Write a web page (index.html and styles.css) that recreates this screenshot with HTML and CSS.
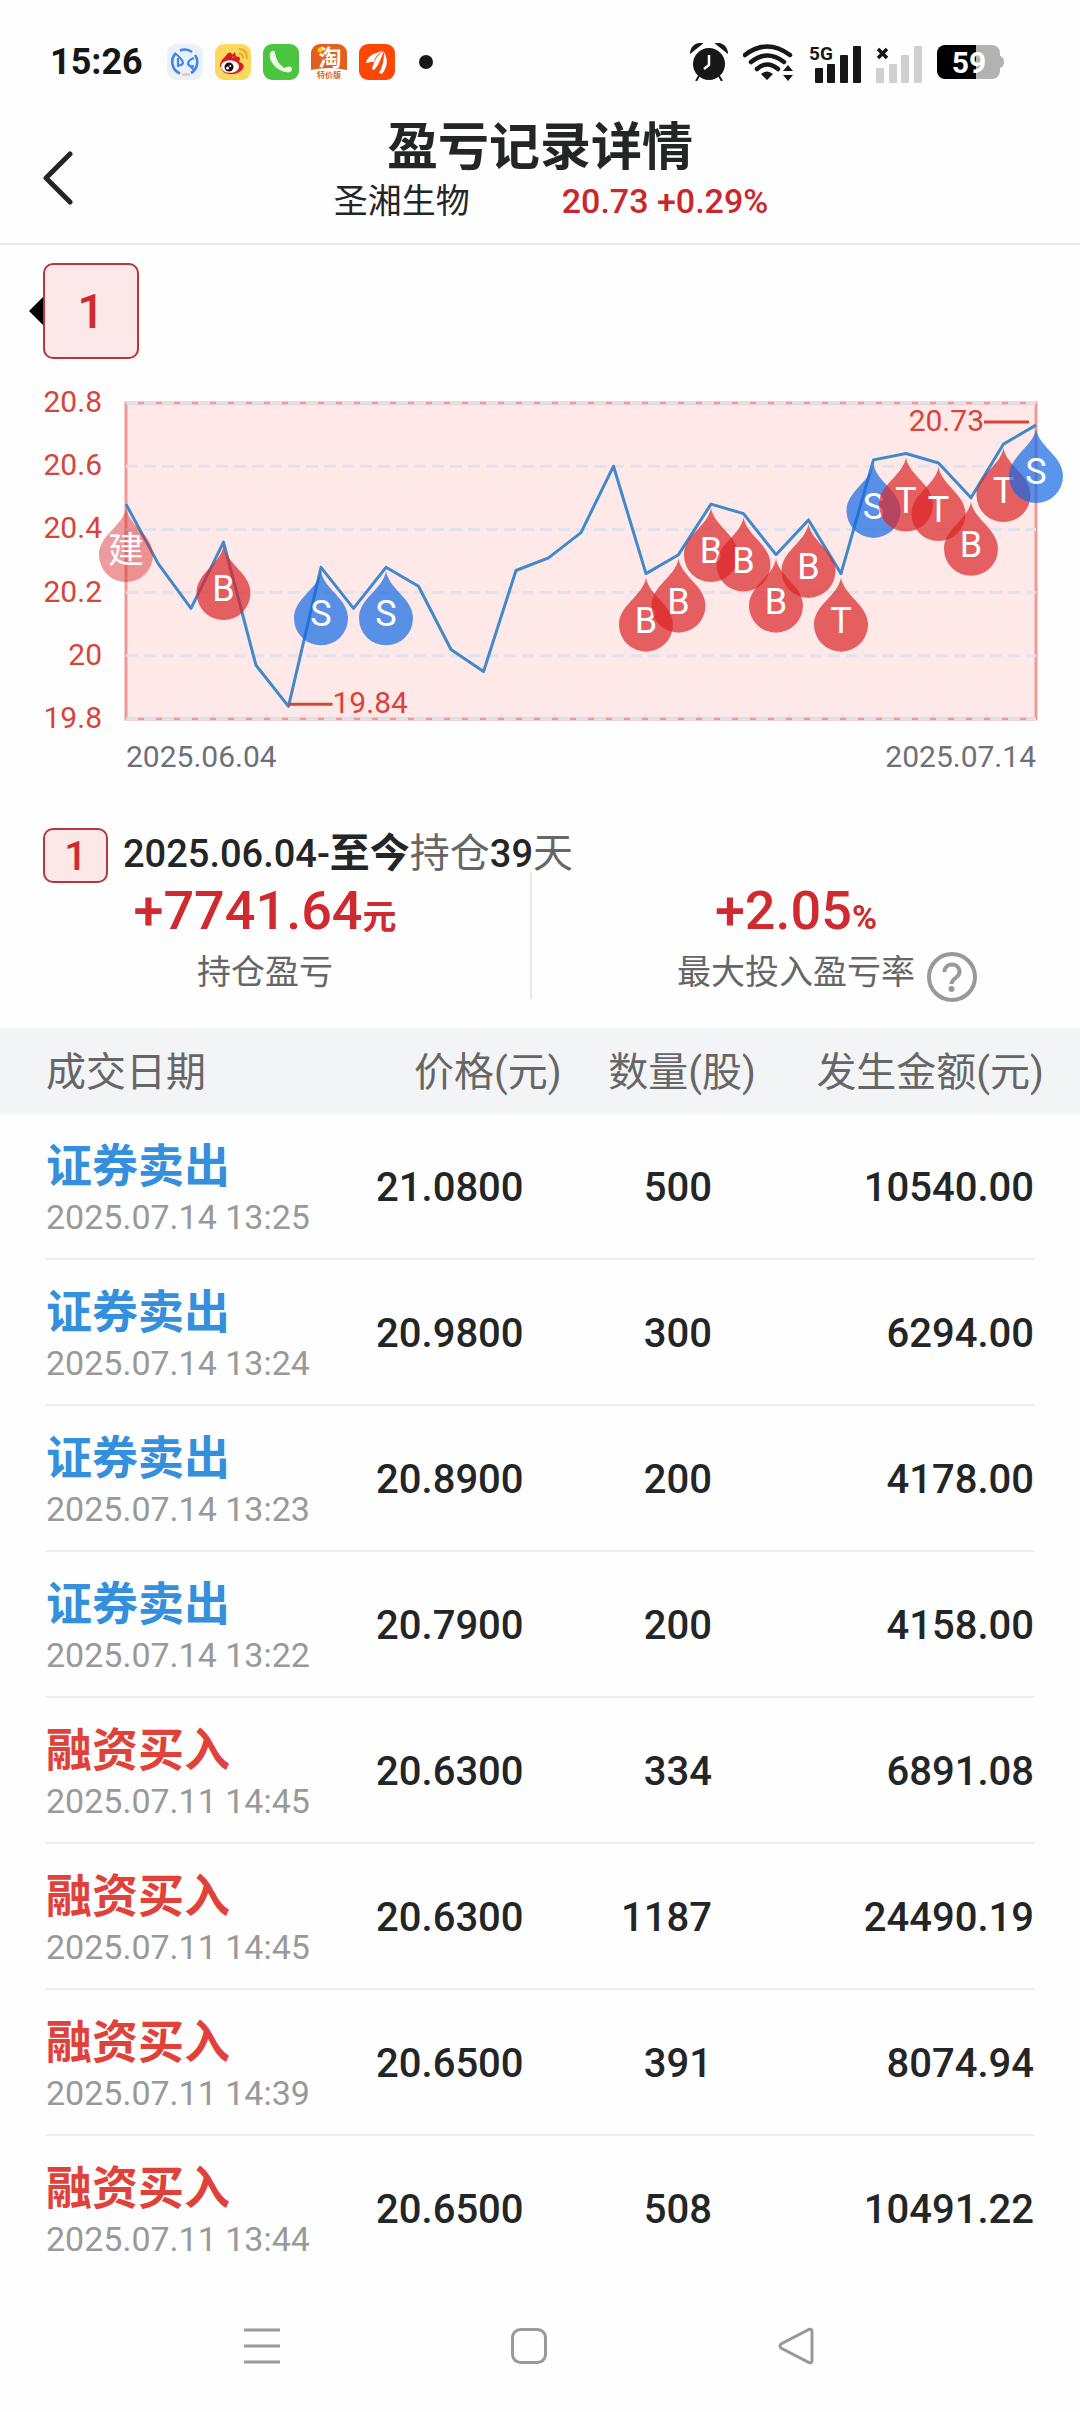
FILE: index.html
```html
<!DOCTYPE html>
<html lang="zh-CN">
<head>
  <meta charset="UTF-8" />
  <meta name="viewport" content="width=device-width, initial-scale=1" />
  <title>盈亏记录详情</title>
  <link rel="stylesheet" href="styles.css">
</head>
<body>

<div class="status-bar">
  <div class="status-left">
    <span class="clock">15:26</span>
    <svg class="app-icon" viewBox="0 0 36 36">
      <rect width="36" height="36" rx="9" fill="#eaf1fb"/>
      <path d="M9 9A12.500 12.500 0 0 0 13 29.500M24 29A12.500 12.500 0 0 0 28 11M13 6.500A12.500 12.500 0 0 1 25 8" fill="none" stroke="#3f86ea" stroke-width="2.600"/>
      <path d="M9 10q7 6 7 9-1 3-5 2M11 14v9M27 22q-5 1-6-2 0-4 6-6M21 20l6 6" fill="none" stroke="#3f86ea" stroke-width="2.200"/>
      <path d="M15 30.500h8" stroke="#f2c1ab" stroke-width="2.500"/>
    </svg>
    <svg class="app-icon" viewBox="0 0 36 36">
      <rect width="36" height="36" rx="9" fill="#fbd95f"/>
      <path d="M5 23c-1-6 7-14 11-13 2 0 2 2 1 4 4-2 8-2 8 1l-1 3c5 1 6 5 3 8-5 6-20 6-21-3z" fill="#d81e20"/>
      <path d="M11 12c1-4 6-5 6-1l3-3 1 5" fill="#d81e20"/>
      <ellipse cx="15" cy="22.500" rx="9" ry="6.300" fill="#fff"/>
      <circle cx="14" cy="23" r="4.500" fill="#111"/>
      <circle cx="12.600" cy="24" r="1.500" fill="#fff"/>
      <circle cx="15.300" cy="22" r="1" fill="#fff"/>
      <path d="M24 9.500c3 0 4 2 4 5M24 5c6 0 8 4 8 10" fill="none" stroke="#f0a22b" stroke-width="2"/>
    </svg>
    <svg class="app-icon" viewBox="0 0 36 36">
      <rect width="36" height="36" rx="9" fill="#4bc53d"/>
      <path d="M7 9c2-3 5-3 5 0l1 4c1 4 4 8 8 11l3-1c3-1 5 0 5 2 0 3-3 4-6 3C14 27 5 17 7 9z" fill="#e9f9e6"/>
    </svg>
    <svg class="app-icon" viewBox="0 0 36 36">
      <path d="M0 26V9a9 9 0 0 1 9-9h18a9 9 0 0 1 9 9v17q-18-4-36 0z" fill="#e2601d"/>
      <text x="19" y="22" class="tao">淘</text>
      <circle cx="9" cy="6" r="2.500" fill="#ffd200"/>
      <text x="18" y="34" class="tao-sub">特价版</text>
    </svg>
    <svg class="app-icon" viewBox="0 0 36 36">
      <rect width="36" height="36" rx="9" fill="#fd4703"/>
      <path d="M7 19c1-6 7-10 17-12-5 3-8 6-9 11-3-1-5 1-8 1zM13 25c2-8 5-14 12-18-3 6-4 13-10 19zM20 29c4-7 5-14 5-21 4 7 4 15-2 22z" fill="#fff"/>
    </svg>
    <span class="dot"></span>
  </div>
  <div class="status-right">
    <svg width="38" height="38" viewBox="0 0 38 38" fill="#171717">
      <circle cx="19" cy="21" r="16"/>
      <path d="M1 9a9 9 0 0 1 10-8zM37 9a9 9 0 0 0-10-8zM9 33l-3 5M29 33l3 5" stroke="#171717" stroke-width="2"/>
      <path d="M19 12v10l-5 4" fill="none" stroke="#fff" stroke-width="2.500"/>
    </svg>
    <svg width="51" height="38" viewBox="0 0 51 38">
      <path d="M2 12Q24-5 47 12M8 19Q24 6 41 19M14 26Q24 17 35 26" fill="none" stroke="#171717" stroke-width="4.500" stroke-linecap="round"/>
      <path d="M18 31q6-5 12 0l-6 6zM40 28l5-6 5 6zM40 32l5 6 5-6z" fill="#171717"/>
    </svg>
    <svg width="52" height="42" viewBox="0 -4 52 42" fill="#171717">
      <text x="0" y="15" class="net">5G</text>
      <rect x="6" y="23" width="8" height="15" rx="1"/>
      <rect x="18" y="19" width="8" height="19" rx="1"/>
      <rect x="31" y="10" width="8" height="28" rx="1"/>
      <rect x="44" y="1" width="8" height="37" rx="1"/>
    </svg>
    <svg width="46" height="42" viewBox="0 -4 46 42" fill="#d0d0d0">
      <path d="M2 4l9 9M11 4l-9 9" stroke="#171717" stroke-width="3.500"/>
      <rect x="0" y="23" width="8" height="15" rx="1"/>
      <rect x="13" y="19" width="8" height="19" rx="1"/>
      <rect x="25" y="10" width="8" height="28" rx="1"/>
      <rect x="38" y="1" width="8" height="37" rx="1"/>
    </svg>
    <svg width="67" height="34" viewBox="0 0 67 34">
      <path d="M39 0h16a8 8 0 0 1 8 8v3q4 1 4 6t-4 6v3a8 8 0 0 1-8 8H39z" fill="#b2b2b2"/>
      <path d="M8 0h31v34H8a8 8 0 0 1-8-8V8a8 8 0 0 1 8-8z"/>
      <text x="32" y="28" class="battery">59</text>
    </svg>
  </div>
</div>

<header class="header">
  <button class="back" aria-label="返回">
    <svg width="30" height="54" viewBox="0 0 30 54"><path d="M27 3L3 27l24 24" fill="none" stroke="#232526" stroke-width="5" stroke-linecap="round" stroke-linejoin="round"/></svg>
  </button>
  <div>
    <h1>盈亏记录详情</h1>
    <p class="stock"><span>圣湘生物</span><span class="quote">20.73 +0.29%</span></p>
  </div>
</header>

<main>
  <div class="tabs">
    <button class="tab">1</button>
  </div>

  <svg class="chart" id="chart" viewBox="0 0 1080 410"></svg>

  <section class="summary">
    <div class="period">
      <span class="badge">1</span>
      <p><b>2025.06.04-<strong>至今</strong></b>持仓<b>39</b>天</p>
    </div>
    <div class="stats">
      <div class="stat">
        <p class="value">+7741.64<small>元</small></p>
        <p class="label">持仓盈亏</p>
      </div>
      <div class="stat">
        <p class="value">+2.05<small>%</small></p>
        <p class="label">最大投入盈亏率<button class="help" aria-label="说明">
          <svg width="50" height="50" viewBox="0 0 50 50" fill="none" stroke="#999" stroke-width="4"><circle cx="25" cy="25" r="23"/><path d="M17.500 20c0-10 15-10 15 0 0 6-8 6-8 12"/><circle cx="24.500" cy="37" r="3" fill="#999" stroke="none"/></svg>
        </button></p>
      </div>
    </div>
  </section>

  <table class="trades">
    <thead>
      <tr><th>成交日期</th><th>价格(元)</th><th>数量(股)</th><th>发生金额(元)</th></tr>
    </thead>
    <tbody>
      <tr><td class="sell"><strong>证券卖出</strong><time>2025.07.14 13:25</time></td><td>21.0800</td><td>500</td><td>10540.00</td></tr>
      <tr><td class="sell"><strong>证券卖出</strong><time>2025.07.14 13:24</time></td><td>20.9800</td><td>300</td><td>6294.00</td></tr>
      <tr><td class="sell"><strong>证券卖出</strong><time>2025.07.14 13:23</time></td><td>20.8900</td><td>200</td><td>4178.00</td></tr>
      <tr><td class="sell"><strong>证券卖出</strong><time>2025.07.14 13:22</time></td><td>20.7900</td><td>200</td><td>4158.00</td></tr>
      <tr><td class="buy"><strong>融资买入</strong><time>2025.07.11 14:45</time></td><td>20.6300</td><td>334</td><td>6891.08</td></tr>
      <tr><td class="buy"><strong>融资买入</strong><time>2025.07.11 14:45</time></td><td>20.6300</td><td>1187</td><td>24490.19</td></tr>
      <tr><td class="buy"><strong>融资买入</strong><time>2025.07.11 14:39</time></td><td>20.6500</td><td>391</td><td>8074.94</td></tr>
      <tr><td class="buy"><strong>融资买入</strong><time>2025.07.11 13:44</time></td><td>20.6500</td><td>508</td><td>10491.22</td></tr>
    </tbody>
  </table>
</main>

<nav class="nav-bar">
  <button aria-label="菜单"><svg width="36" height="38" viewBox="0 0 36 38"><path d="M0 3h36M0 19h36M0 35h36"/></svg></button>
  <button aria-label="主页"><svg width="36" height="38" viewBox="0 0 36 38"><rect x="1.500" y="2.500" width="33" height="33" rx="8"/></svg></button>
  <button aria-label="后退"><svg width="36" height="38" viewBox="0 0 36 38"><path d="M31 2.500q3-1 3 2v29q0 3-3 2L3 21q-2-2 0-4z"/></svg></button>
</nav>

<script src="chart.js"></script>
</body>
</html>
```
FILE: styles.css
```css
* {
  box-sizing: border-box;
}

body {
  margin: 0;
  background: #fefefe;
  color: #232526;
  font-family: Roboto, "Noto Sans CJK SC", sans-serif;
}

h1,
p {
  margin: 0;
}

button {
  padding: 0;
  border: none;
  background: none;
  font-family: inherit;
  cursor: pointer;
}

svg {
  display: block;
}

/* status bar */
.status-bar {
  display: flex;
  justify-content: space-between;
  align-items: center;
  height: 108px;
  padding: 16px 76px 0 50px;
}

.status-left,
.status-right {
  display: flex;
  align-items: center;
}

.status-left {
  gap: 12px;
}

.status-right {
  gap: 15px;
}

.clock {
  margin-right: 12px;
  color: #171717;
  font-size: 36px;
  font-weight: 700;
}

.app-icon {
  width: 36px;
  height: 36px;
}

.tao {
  fill: #fff;
  font-size: 23px;
  font-weight: 700;
  text-anchor: middle;
}

.tao-sub {
  fill: #e2601d;
  font-size: 8px;
  font-weight: 700;
  text-anchor: middle;
}

.dot {
  width: 14px;
  height: 14px;
  margin-left: 12px;
  border-radius: 50%;
  background: #171717;
}

.net {
  font-size: 19px;
  font-weight: 700;
}

.battery {
  fill: #fff;
  font-size: 30px;
  font-weight: 700;
  text-anchor: middle;
}

/* page header */
.header {
  display: grid;
  grid-template-columns: 1fr auto 1fr;
  align-items: center;
  height: 137px;
  padding: 6px 43px 10px;
  border-bottom: 2px solid #e6e8e9;
  text-align: center;
}

.back {
  justify-self: start;
  margin-top: 8px;
}

.header h1 {
  font-size: 51px;
  font-weight: 700;
  line-height: 54px;
}

.stock {
  display: flex;
  gap: 92px;
  padding-left: 22px;
  font-size: 34px;
  line-height: 52px;
}

.quote {
  color: #c9272c;
  font-weight: 500;
}

/* position tabs */
.tabs {
  padding: 18px 43px 0;
}

.tab,
.badge {
  display: block;
  border: 2px solid #b5373c;
  background: #fce8e8;
  color: #cf2a2f;
  font-weight: 500;
  text-align: center;
}

.tab {
  position: relative;
  width: 96px;
  height: 96px;
  border-radius: 10px;
  font-size: 48px;
}

.tab::before {
  content: "";
  position: absolute;
  top: 32px;
  right: 94px;
  border: 14px solid transparent;
  border-left: 0;
  border-right-color: #000;
}

.badge {
  width: 65px;
  height: 55px;
  border-radius: 10px;
  font-size: 40px;
  line-height: 54px;
}

/* chart */
.chart {
  width: 100%;
  margin-top: 11px;
  font-size: 30px;
}

.area {
  fill: #ffe9e8;
  stroke: #f09a95;
  stroke-width: 3;
}

.grid {
  stroke: #e0e3ec;
  stroke-width: 3;
  stroke-dasharray: 12 6;
}

.price-line {
  fill: none;
  stroke: #4089cb;
  stroke-width: 3;
  stroke-linejoin: round;
}

.axis-label,
.peak {
  fill: #d8433a;
}

.axis-label,
.end {
  text-anchor: end;
}

.date {
  fill: #6e7079;
}

.peak-line {
  stroke: #d8433a;
  stroke-width: 3;
}

.pin-buy {
  fill: #db2327;
  fill-opacity: 0.7;
}

.pin-open {
  fill: #db2327;
  fill-opacity: 0.45;
}

.pin-sell {
  fill: #1368e4;
  fill-opacity: 0.7;
}

.pin-text {
  fill: #fff;
  font-size: 36px;
  text-anchor: middle;
}

/* summary */
.summary {
  padding: 48px 0 29px;
}

.period {
  display: flex;
  gap: 15px;
  height: 55px;
  padding-left: 43px;
  color: #666;
  font-size: 40px;
  line-height: 52px;
}

.period b {
  color: #232526;
  font-size: 38px;
  font-weight: 500;
}

.period strong {
  font-size: 40px;
  font-weight: 700;
}

.stats {
  display: grid;
  grid-template-columns: 1fr 1fr;
  margin-top: -11px;
  padding-right: 20px;
  text-align: center;
}

.stat {
  padding: 11px 0 7px;
}

.stat + .stat {
  border-left: 2px solid #e6e8e9;
}

.value {
  color: #cf2a2f;
  font-size: 54px;
  font-weight: 500;
  line-height: 56px;
}

.value small {
  font-size: 34px;
  font-weight: 700;
  line-height: 34px;
}

.label {
  margin-top: 13px;
  color: #666;
  font-size: 34px;
  line-height: 40px;
}

.help {
  position: absolute;
  margin-left: 12px;
}

/* trades */
.trades {
  width: 100%;
  border-collapse: collapse;
  table-layout: fixed;
}

.trades th {
  height: 86px;
  padding: 0 0 4px;
  background: #f3f4f6;
  color: #666;
  font-size: 40px;
  font-weight: 400;
  text-align: right;
}

.trades th:first-child {
  width: 32%;
  padding-left: 46px;
  text-align: left;
}

.trades th:nth-child(2) {
  width: 20%;
}

.trades th:nth-child(3) {
  width: 18%;
}

.trades th:last-child {
  width: 30%;
  padding-right: 36px;
}

.trades tbody tr {
  background: linear-gradient(#ededed, #ededed) bottom / calc(100% - 92px) 2px no-repeat;
}

.trades tbody tr:last-child {
  background: none;
}

.trades td {
  height: 146px;
  padding: 0 44px 0 0;
  font-size: 40px;
  font-weight: 500;
  text-align: right;
}

.trades td:nth-child(2) {
  padding-right: 38px;
}

.trades td:first-child {
  padding: 6px 0 0 46px;
  text-align: left;
  white-space: nowrap;
}

.trades td:last-child {
  padding-right: 46px;
}

.trades td strong {
  display: block;
  font-size: 46px;
  line-height: 54px;
}

.trades time {
  display: block;
  color: #999;
  font-size: 34px;
  font-weight: 400;
  line-height: 48px;
}

.sell {
  color: #348fdd;
}

.buy {
  color: #e04239;
}

/* system navigation */
.nav-bar {
  display: flex;
  justify-content: space-between;
  align-items: center;
  height: 128px;
  padding: 0 24.6% 0 22.6%;
}

.nav-bar svg {
  fill: none;
  stroke: #999;
  stroke-width: 3;
}
```
FILE: chart.js
```js
const chart = document.getElementById("chart");

const prices = [
  20.48, 20.29, 20.15, 20.36, 19.97, 19.84, 20.28, 20.15, 20.28, 20.22,
  20.02, 19.95, 20.27, 20.31, 20.39, 20.6, 20.26, 20.32, 20.48, 20.45,
  20.32, 20.43, 20.26, 20.62, 20.64, 20.61, 20.5, 20.67, 20.73
];

// day index -> marker text
const marks = {
  0: "建", 3: "B", 6: "S", 8: "S", 16: "B", 17: "B", 18: "B", 19: "B", 20: "B",
  21: "B", 22: "T", 23: "S", 24: "T", 25: "T", 26: "B", 27: "T", 28: "S"
};

const left = 126, right = 1036, top0 = 33, bottom = 349;
const x = i => left + (right - left) * i / (prices.length - 1);
const y = p => top0 + (20.8 - p) * (bottom - top0);

let out = `<rect class="area" x="${left}" y="${top0}" width="${right - left}" height="${bottom - top0}"/>`;

[20.8, 20.6, 20.4, 20.2, 20, 19.8].forEach(p => {
  out += `<line class="grid" x1="${left}" x2="${right}" y1="${y(p)}" y2="${y(p)}"/>`;
  out += `<text class="axis-label" x="102" y="${y(p) + 9}">${p}</text>`;
});

out += `<polyline class="price-line" points="${prices.map((p, i) => x(i) + "," + y(p)).join(" ")}"/>`;

Object.keys(marks).forEach(i => {
  const type = marks[i] === "S" ? "sell" : marks[i] === "建" ? "open" : "buy";
  out += `<g transform="translate(${x(i)} ${y(prices[i])})">
    <path class="pin-${type}" d="M0 4C3 22 27 31 27 51A27 27 0 0 1 -27 51C-27 31 -3 22 0 4z"/>
    <text class="pin-text" x="0" y="59">${marks[i]}</text>
  </g>`;
});

// lowest and highest price
out += `<line class="peak-line" x1="${x(5)}" x2="${x(5) + 44}" y1="${y(19.84) - 2}" y2="${y(19.84) - 2}"/>
  <text class="peak" x="${x(5) + 44}" y="${y(19.84) + 7}">19.84</text>
  <line class="peak-line" x1="${right - 52}" x2="${right - 7}" y1="${y(20.73) - 3}" y2="${y(20.73) - 3}"/>
  <text class="peak end" x="${right - 52}" y="${y(20.73) + 6}">20.73</text>
  <text class="date" x="${left}" y="397">2025.06.04</text>
  <text class="date end" x="${right}" y="397">2025.07.14</text>`;

chart.innerHTML = out;
```
